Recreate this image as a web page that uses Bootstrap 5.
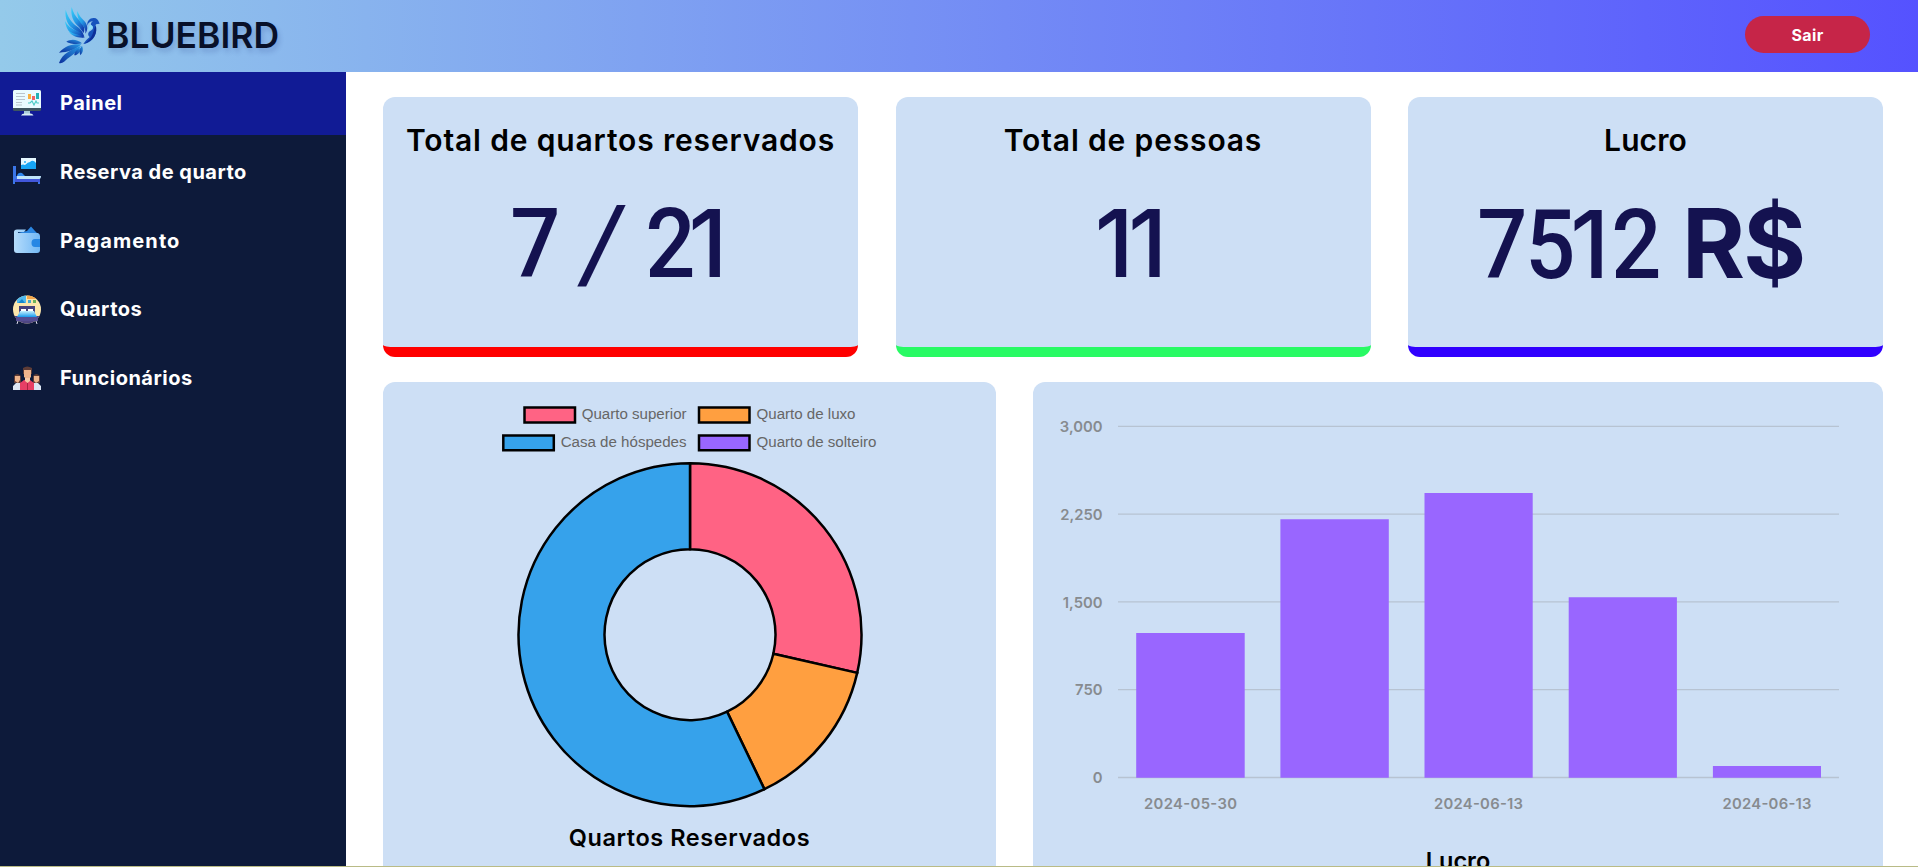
<!DOCTYPE html>
<html lang="pt-BR">
<head>
<meta charset="utf-8">
<meta name="viewport" content="width=device-width, initial-scale=1">
<title>BLUEBIRD</title>
<link href="https://cdn.jsdelivr.net/npm/bootstrap@5.3.0/dist/css/bootstrap.min.css" rel="stylesheet">
<style>
html,body{height:100%;overflow:hidden}
body{font-family:Inter,"Open Sans",sans-serif;color:#000;background:#fff}
.shell{height:867px;overflow:hidden;border-bottom:1px solid #b9bb86}
.topbar{height:72px;background:linear-gradient(to right,#94caea,#5552ff);padding:0 48px 0 50px}
.brand-bird{width:56px;height:70px;flex:none}
.brand-name{font-size:35.5px;font-weight:600;line-height:1;color:#081029;text-shadow:2px 4px 5px rgba(30,50,130,.2)}
.btn-exit{width:125px;height:37px;border-radius:19px;background:#c62548;color:#fff;font-weight:700;font-size:16px;line-height:1;letter-spacing:.4px;margin-bottom:3px}
.side{width:346px;flex:none;background:#0d1a3a}
.side .nav-link{height:63px;flex:none;margin-bottom:5.8px;padding:0 0 0 13px;gap:19px;color:#fff;font-weight:700;font-size:20px;line-height:1;letter-spacing:.5px}
.side .nav-link.active{background:#111b95}
.side .nav-link:nth-child(3){letter-spacing:1.1px}
.side .nav-link span{margin-top:-1px}
.side svg{width:28px;height:30px;flex:none}
.board{padding:25px 35px 0 37px}
.panel{background:#cddff5;border-radius:12px}
.stat{width:475px;height:260px;border-bottom:10px solid}
.stat h2{font-size:30px;font-weight:600;line-height:36px;margin:25px 0 0;letter-spacing:.85px}
.stat.b-blue h2{letter-spacing:.1px}
.stat .figure-num{font-family:Roboto,sans-serif;font-size:96px;font-weight:500;line-height:100px;color:#141250;margin-top:34.5px;white-space:pre}
/* condensed digits, and a narrow figure one */
.dg{display:inline-block;transform:scaleX(.92)}
.n1{font-family:Inter,sans-serif;font-size:94px;font-weight:500}
.t2{margin-left:-9px;margin-right:5.5px}
.t3{margin-left:-5.5px;margin-right:4px}
.t5{margin-left:-6.6px;margin-right:-7.4px}
.slash{display:inline-block;transform:skewX(-9deg) scaleY(1.1);margin:0 -2px 0 -3px}
.figure-num b{font-family:Inter,sans-serif;font-weight:700;letter-spacing:-2px;margin:0 12px 0 -5.5px}
.b-red{border-color:#f00}.b-green{border-color:#28fa64}.b-blue{border-color:#3000ff}
.chart-a{width:613px;height:560px}
.chart-b{width:850px;height:560px}
.panel h3{font-size:23.5px;font-weight:600;line-height:32px;margin:0}
.chart-a h3{letter-spacing:.55px}
.legend-t text{font-family:"Liberation Sans",sans-serif;font-size:15.1px;fill:#666}
.axis text{font-weight:600;font-size:14.8px;fill:#878b8f}
</style>
</head>
<body>
<div class="shell d-flex flex-column">
<header class="topbar d-flex align-items-center justify-content-between flex-shrink-0">
  <div class="d-flex align-items-center">
    <svg class="brand-bird" viewBox="0 0 168 210">
      <defs>
        <linearGradient id="wing" x1="0" y1="0" x2=".7" y2="1"><stop offset="0" stop-color="#36d3fa"/><stop offset=".55" stop-color="#2498e6"/><stop offset="1" stop-color="#123fae"/></linearGradient>
        <linearGradient id="tail" x1="1" y1="0" x2="0" y2="1"><stop offset="0" stop-color="#279ce6"/><stop offset="1" stop-color="#0c2f9c"/></linearGradient>
      </defs>
      <g fill="url(#wing)">
        <path d="M65 18c-4 22 4 46 22 60l14 18c6-14-2-28-13-38-12-12-19-24-23-40z"/>
        <path d="M82 30c-2 20 8 34 17 44 6 8 8 14 7 24 10-14 6-28-3-38-9-9-17-18-21-30z"/>
        <path d="M47 26c-3 26 6 48 26 60l30 22c-4-18-13-26-25-34-16-12-25-28-31-48z"/>
        <path d="M45 60c3 22 13 38 30 43 13 5 22 5 29 7-6-12-15-17-27-22-14-6-24-14-32-28z"/>
        <path d="M56 90c8 14 24 21 46 20-8-9-29-9-46-20z"/>
      </g>
      <path fill="#1753bd" d="M112 74c-2-14 8-24 20-23 8 0 12 5 15 13l2 4-11 2c-4 5 2 12 0 23-3 17-16 33-38 36 6-8 10-14 19-21-6-5-6-14 2-18 9-4 10-9 5-14-5-4-4-12 3-15-9 0-15 5-17 13z"/>
      <path fill="#0c2e98" d="M137 73c7 22-4 47-36 56 14-8 25-22 28-34z"/>
      <path fill="#8fdcfa" d="M115 84c1-8 5-13 8-12 8 3 7 9 1 12-4 2-7 4-9 7z"/>
      <g fill="url(#tail)">
        <path d="M96 127c-14-13-34-14-47-5 12 7 33 9 47 5z"/>
        <path d="M94 130c-24-2-48 2-67 25 26-1 51-9 67-25z"/>
        <path d="M93 134c-27 12-57 22-66 52 10 3 18-6 25-13 17-13 32-22 41-39z"/>
        <path d="M93 140c-12 4-20 12-20 23 12-1 19-12 20-23z"/>
        <path d="M96 134c-7 9-9 20-5 29 8-8 10-18 5-29z"/>
      </g>
    </svg>
    <span class="brand-name">BLUEBIRD</span>
  </div>
  <button class="btn btn-exit border-0 p-0" type="button">Sair</button>
</header>
<div class="d-flex flex-grow-1" style="min-height:0">
  <nav class="side nav flex-column flex-nowrap">
    <a class="nav-link active d-flex align-items-center" href="#">
      <svg viewBox="0 0 28 30"><path fill="#a8cbd8" d="M11 22h6v4h-6z"/><path fill="#d7edf5" d="M8 26.500q1-2 3.500-2h6q2 0 3 2z"/><rect y="1" width="28" height="21" rx="1.500" fill="#3e5560"/><path fill="#e9fbff" d="M0 19V2.500Q0 1 1.500 1h25Q28 1 28 2.500V19z"/><path stroke="#b9c5cd" stroke-width="1" d="M3 4.500h9M3 7.500h9M3 10.500h9M3 13.500h6M3 16h6"/><path fill="#fbb03c" d="M15 5h3v5h-3z"/><path fill="#f06464" d="M19 7h3v4h-3z"/><path fill="#24b2b6" d="M23 4h3v6h-3z"/><path fill="none" stroke="#4ccbc5" stroke-width="1.100" d="M15 14h2l2-2 2 4 2-4 1 2h2"/></svg>
      <span>Painel</span></a>
    <a class="nav-link d-flex align-items-center" href="#">
      <svg viewBox="0 0 28 30"><path fill="#e5f7ff" d="M8 1h15v11H8z"/><circle cx="12" cy="5" r="1" fill="#27adf5"/><path fill="#16a4f5" d="M8 8q2-1 4 0 3-3 5-3 3-3 6 1v6H8z"/><path fill="#3b76e8" d="M0 9h3v10h24v8h-2v-2H2v2H0z"/><path fill="#4257db" d="M2 22h25v3H2z"/><path fill="#2f86ee" d="M4 19q1-4 5-3l3 3z"/><path fill="#bfe3fa" d="M4 19h24q0 3-2 3H4z"/></svg>
      <span>Reserva de quarto</span></a>
    <a class="nav-link d-flex align-items-center" href="#">
      <svg viewBox="0 0 28 30"><defs><linearGradient id="wal"><stop stop-color="#b5dcfb"/><stop offset="1" stop-color="#72b8f5"/></linearGradient></defs><path fill="#2b87e2" d="M4 7 14 5l4-4.500L22 5l3 3v3H4z"/><path fill="url(#wal)" d="M1 6q0-2.500 3-2.500h9L11 6H5v1h20q2 1 2 3v14q0 3-3 3H4q-3 0-3-3z"/><path fill="#2787e4" d="M27 13v8h-5q-3.500 0-3.500-4T22 13z"/></svg>
      <span>Pagamento</span></a>
    <a class="nav-link d-flex align-items-center" href="#">
      <svg viewBox="0 0 28 30"><defs><clipPath id="rc"><circle cx="14" cy="14.500" r="14"/></clipPath><linearGradient id="bed" x2="0" y2="1"><stop stop-color="#c7f1ff"/><stop offset="1" stop-color="#1798ed"/></linearGradient></defs><g clip-path="url(#rc)"><path fill="#fce6ab" d="M0 0h28v30H0z"/><path fill="#50b9ed" d="M4 0h9v8H4z"/><path fill="#1588ce" d="m5 8 4-4 3 4z"/><path fill="#f3a64b" d="M14 0h10v4H14z"/><path fill="#49a7cc" d="M15 5h3v3h-3z"/><path fill="#6eb259" d="M20 5h3v3h-3z"/><path fill="#45417c" d="M6 11h16v9H6z"/><path fill="#4f4683" d="M0 21h28v9H0z"/></g><path fill="#fff" d="M8 14h5v3H8zm7 0h5v3h-5z"/><path fill="url(#bed)" d="M7 16h14l3 6H4z"/><path fill="#554d94" d="M3 22h22v4H3z"/><path stroke="#dedbea" d="m5 26-1 3m19-3 1 3"/></svg>
      <span>Quartos</span></a>
    <a class="nav-link d-flex align-items-center" href="#">
      <svg viewBox="0 0 28 30"><path fill="#5e3c36" d="M1 12q3-4 7 0v7H1zm19 0q3-4 7 0v7h-7zM10 4q4-3 9 0v6h-9z"/><path fill="#eeb48c" d="M2 12h5v4l-2 3-3-2zm19 0h5v5l-3 2-2-2zM11 6h7v7l-3 3-4-3z"/><path fill="#dce6f4" d="M0 26v-4l3-3h4v7zm21-7h4l3 3v4h-7z"/><path fill="#e73f65" d="M7 26v-7l4-3h6l4 3v7z"/><path fill="#f7c8a5" d="M12 14h5v3l-2.500 2L12 17z"/><path stroke="#a82442" d="M14.500 19v7"/></svg>
      <span>Funcionários</span></a>
  </nav>
  <main class="board flex-grow-1">
    <div class="d-flex justify-content-between text-center">
      <section class="panel stat b-red"><h2>Total de quartos reservados</h2><div class="figure-num"><span class="dg">7</span> <span class="slash">/</span> <span class="dg">2</span><span class="n1 t2">1</span></div></section>
      <section class="panel stat b-green"><h2>Total de pessoas</h2><div class="figure-num"><span class="n1">1</span><span class="n1 t3">1</span></div></section>
      <section class="panel stat b-blue"><h2>Lucro</h2><div class="figure-num"><span class="dg">7</span><span class="dg t5">5</span><span class="n1">1</span><span class="dg">2</span> <b>R$</b></div></section>
    </div>
    <div class="d-flex justify-content-between text-center" style="margin-top:25px">
      <section class="panel chart-a">
        <svg class="d-block" width="613" height="440" viewBox="383 382 613 440">
          <g stroke="#000" stroke-width="2.500">
            <path fill="#ff6384" d="M524.500 407.600h50.500v14.900h-50.500z"/><path fill="#ff9f40" d="M699 407.600h50.500v14.900H699z"/>
            <path fill="#36a2eb" d="M503.300 435.400h50.500v14.900h-50.500z"/><path fill="#96f" d="M699 435.400h50.500v14.900H699z"/>
            <path fill="#ff6384" d="M690 463.200A171.500 171.500 0 0 1 857.200 672.860L773.360 653.730A85.500 85.500 0 0 0 690 549.200z"/>
            <path fill="#ff9f40" d="M857.200 672.860A171.500 171.500 0 0 1 764.410 789.220L727.100 711.730A85.500 85.500 0 0 0 773.360 653.730z"/>
            <path fill="#36a2eb" d="M764.410 789.220A171.500 171.500 0 1 1 690 463.200V549.200A85.500 85.500 0 1 0 727.100 711.730z"/>
          </g>
          <g class="legend-t">
            <text x="581.700" y="419">Quarto superior</text><text x="756.500" y="419">Quarto de luxo</text>
            <text x="560.700" y="447">Casa de hóspedes</text><text x="756.500" y="447">Quarto de solteiro</text>
          </g>
        </svg>
        <h3>Quartos Reservados</h3>
      </section>
      <section class="panel chart-b">
        <svg class="d-block" width="850" height="463" viewBox="1033 382 850 463">
          <path stroke="#b7c3d2" stroke-width="1.300" d="M1118 426.300h721M1118 514.100h721M1118 601.900h721M1118 689.700h721M1118 777.500h721"/>
          <path fill="#96f" d="M1136.200 633h108.500v144.800h-108.500zM1280.400 519.200h108.400v258.600h-108.400zM1424.500 493h108.200v284.800h-108.200zM1568.700 597.300h108.200v180.500h-108.200zM1712.900 766h108.100v11.800h-108.100z"/>
          <g class="axis">
            <g text-anchor="end"><text x="1102.500" y="432">3,000</text><text x="1102.500" y="520">2,250</text><text x="1102.500" y="608">1,500</text><text x="1102.500" y="695">750</text><text x="1102.500" y="783">0</text></g>
            <g><text x="1144" y="809" textLength="93">2024-05-30</text><text x="1434" y="809" textLength="89">2024-06-13</text><text x="1722.500" y="809" textLength="89">2024-06-13</text></g>
          </g>
        </svg>
        <h3>Lucro</h3>
      </section>
    </div>
  </main>
</div>
</div>
<script src="https://cdn.jsdelivr.net/npm/bootstrap@5.3.0/dist/js/bootstrap.bundle.min.js"></script>
</body>
</html>
